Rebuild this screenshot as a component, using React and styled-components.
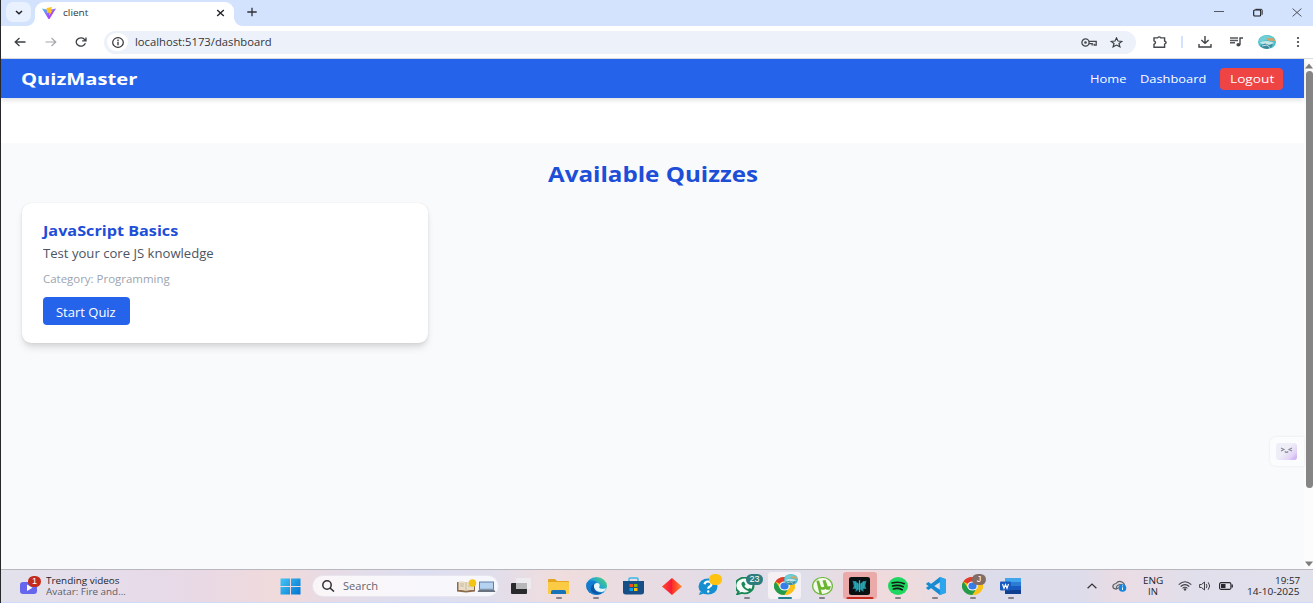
import React, { useLayoutEffect, useRef } from 'react';
import styled, { createGlobalStyle, css } from 'styled-components';

const GlobalStyle = createGlobalStyle`
  * { box-sizing: border-box; }
  html, body { margin: 0; padding: 0; overflow: hidden; }
  body { font-family: "Open Sans", "Noto Sans", sans-serif; }
  h1 { margin: 0; }
  svg { display: block; flex: none; }
  button { font: inherit; border: 0; }
`;

/* ---------- text that fills a given width ---------- */
const TextBox = styled.span`
  display: block;
  flex: none;
  width: ${(p) => p.$w}px;
  height: ${(p) => p.$lh || 14}px;
  line-height: ${(p) => p.$lh || 14}px;
  font-size: ${(p) => p.$size}px;
  font-weight: ${(p) => p.$weight || 400};
  color: ${(p) => p.$color || 'inherit'};
  white-space: nowrap;
  text-align: left;
`;
const Stretch = styled.span`
  display: inline-block;
  transform-origin: 0 50%;
`;
function Text({ w, size, lh, weight, color, children, as }) {
  const ref = useRef(null);
  useLayoutEffect(() => {
    const el = ref.current;
    el.style.transform = `scaleX(${w / el.offsetWidth})`;
  }, [w, children]);
  return (
    <TextBox as={as} $w={w} $size={size} $lh={lh} $weight={weight} $color={color}>
      <Stretch ref={ref}>{children}</Stretch>
    </TextBox>
  );
}

function Icon({ w = 21, h = 18, box = '0 0 24 24', children, ...rest }) {
  return (
    <svg width={w} height={h} viewBox={box} preserveAspectRatio="none" fill="none" {...rest}>
      {children}
    </svg>
  );
}

/* ---------- window ---------- */
const Window = styled.div`
  width: 1313px;
  height: 603px;
  display: flex;
  flex-direction: column;
  background: #fff;
  border-left: 1px solid #26272b;
  overflow: hidden;
`;
const TabStrip = styled.div`
  height: 26px;
  flex: none;
  display: flex;
  background: #d3e3fd;
`;
const TabSearch = styled.div`
  width: 25px;
  height: 20px;
  margin: 2px 0 0 5px;
  border-radius: 7px;
  background: #e9f1fe;
  display: flex;
  align-items: center;
  justify-content: center;
`;
const Tab = styled.div`
  position: relative;
  width: 199px;
  margin: 2px 0 0 4px;
  height: 24px;
  background: #fff;
  border-radius: 9px 9px 0 0;
  display: flex;
  align-items: center;
  padding: 0 9px 3px 7px;
  &::before, &::after {
    content: '';
    position: absolute;
    bottom: 0;
    width: 8px;
    height: 8px;
  }
  &::before { left: -8px; background: radial-gradient(circle at 0 0, transparent 7.5px, #fff 8px); }
  &::after { right: -8px; background: radial-gradient(circle at 100% 0, transparent 7.5px, #fff 8px); }
`;
const TabTitle = styled.div`
  flex: 1;
  padding-left: 6.5px;
`;
const NewTab = styled.div`
  margin: 7px 0 0 13px;
`;
const WindowControls = styled.div`
  margin-left: auto;
  display: flex;
  align-items: center;
  padding: 0 11px 2px 0;
  gap: 29px;
`;
const Toolbar = styled.div`
  height: 33px;
  flex: none;
  display: flex;
  align-items: center;
  padding: 0 13px 0 13px;
  border-bottom: 1px solid #dadce0;
`;
const NavButtons = styled.div`
  display: flex;
  align-items: center;
  gap: 18.5px;
  width: 90px;
`;
const Omnibox = styled.div`
  width: 1032px;
  height: 23px;
  border-radius: 12px;
  background: #ecf1fa;
  display: flex;
  align-items: center;
  padding: 0 13px 0 3px;
`;
const SiteInfo = styled.div`
  width: 21px;
  height: 18px;
  border-radius: 9px;
  background: #fff;
  display: flex;
  align-items: center;
  justify-content: center;
  margin-right: 7px;
`;
const OmniActions = styled.div`
  margin-left: auto;
  display: flex;
  align-items: center;
  gap: 13px;
`;
const ToolActions = styled.div`
  margin-left: auto;
  display: flex;
  align-items: center;
`;
const Divider = styled.i`
  width: 2px;
  height: 12px;
  background: #d3e3fd;
  margin: 0 15px 0 13px;
`;

/* ---------- page ---------- */
const Viewport = styled.div`
  height: 510px;
  flex: none;
  display: flex;
`;
const Page = styled.div`
  position: relative;
  width: 1303px;
  display: flex;
  flex-direction: column;
`;
const Navbar = styled.nav`
  height: 39px;
  flex: none;
  background: #2563eb;
  color: #fff;
  display: flex;
  align-items: center;
  justify-content: space-between;
  padding: 1px 21px 0 20px;
  box-shadow: 0 2px 5px rgba(0, 0, 0, 0.13);
`;
const NavLinks = styled.div`
  display: flex;
  align-items: center;
  gap: 13.5px;
`;
const Logout = styled.button`
  width: 63.5px;
  height: 22px;
  padding: 0 10px;
  border-radius: 4px;
  background: #ef4444;
  color: #fff;
  display: flex;
  align-items: center;
`;
const Main = styled.main`
  flex: 1;
  margin-top: 45px;
  background: #f9fafb;
  padding: 15px 21px;
  display: flex;
  flex-direction: column;
`;
const Heading = styled.div`
  display: flex;
  justify-content: center;
  margin-bottom: 14.5px;
`;
const Card = styled.article`
  width: 406px;
  height: 140px;
  border-radius: 9px;
  background: #fff;
  padding: 17px 21px;
  box-shadow: 0 0 1px rgba(0, 0, 0, 0.14), 0 6px 9px -2px rgba(0, 0, 0, 0.13), 0 2px 4px rgba(0, 0, 0, 0.05);
  display: flex;
  flex-direction: column;
  align-items: flex-start;
`;
const StartButton = styled.button`
  width: 87px;
  height: 28px;
  margin-top: 10.5px;
  margin-left: -0.5px;
  padding: 1px 13.5px 0;
  border-radius: 4px;
  background: #2563eb;
  color: #fff;
  display: flex;
  align-items: center;
`;
const Gap = styled.div`
  height: ${(p) => p.$h}px;
`;
const Assistant = styled.div`
  position: absolute;
  right: 0;
  top: 378px;
  width: 34px;
  height: 29px;
  border-radius: 6px 0 0 6px;
  background: #fbfcfd;
  box-shadow: 0 0 3px rgba(0, 0, 0, 0.08);
  display: flex;
  align-items: center;
  padding-left: 6px;
`;
const Face = styled.div`
  width: 21px;
  height: 17px;
  border-radius: 3px;
  background: linear-gradient(135deg, #eeeef6 45%, #e3d5f7 75%, #c6a4f0);
`;
const Scrollbar = styled.div`
  width: 9px;
  background: #fcfcfc;
  display: flex;
  flex-direction: column;
  align-items: flex-end;
  padding: 4px 0 2px;
`;
const Thumb = styled.div`
  width: 7px;
  height: 417px;
  margin-top: 2px;
  border-radius: 4px;
  background: #858585;
`;
const ScrollEnd = styled.div`
  margin-top: auto;
`;

/* ---------- taskbar ---------- */
const Taskbar = styled.footer`
  height: 34px;
  flex: none;
  display: flex;
  align-items: center;
  border-top: 1px solid #b9b7bd;
  border-bottom: 1px solid #cfdcf8;
  color: #25262b;
  background: linear-gradient(90deg, #e2e2ec 0, #e6dcea 110px, #e8d9e6 190px, #f0dadb 280px, #e6dbe6 335px, #dcdff1 420px, #e1deec 490px, #f0dddd 555px, #eadce1 620px, #e3dce7 720px, #dedfeb 800px, #efdadd 865px, #eedbdd 910px, #dddcea 980px, #dddcea 1080px, #ebdce4 1120px, #e1dfeb 1190px, #e1e1ec 100%);
`;
const Widget = styled.div`
  width: 279px;
  display: flex;
  align-items: center;
  padding: 0 0 1px 18px;
  gap: 4.5px;
`;
const SearchPill = styled.div`
  width: 187px;
  height: 22px;
  margin-left: 11px;
  border-radius: 11px;
  background: linear-gradient(90deg, #faf6f8, #f6f7fd);
  border: 1px solid #e9e5ef;
  display: flex;
  align-items: center;
  padding: 0 2px 0 8px;
`;
const SearchArt = styled.div`
  margin-left: auto;
`;
const Apps = styled.div`
  display: flex;
  height: 100%;
  margin-left: 3px;
`;
const AppSlot = styled.div`
  position: relative;
  width: 37.68px;
  height: 32px;
  display: flex;
  align-items: center;
  justify-content: center;
  &::before {
    content: '';
    position: absolute;
    z-index: 0;
    inset: 2px 2px 3px;
    border-radius: 3px;
    background: ${(p) => (p.$tile ? p.$tile : 'transparent')};
  }
  > svg { position: relative; z-index: 1; }
  ${(p) => p.$bar && css`
    &::after {
      content: '';
      position: absolute;
      z-index: 2;
      bottom: 3.5px;
      left: 50%;
      width: ${p.$barW || 6}px;
      height: 2px;
      border-radius: 1px;
      transform: translateX(-50%);
      background: ${p.$bar};
    }
  `}
`;
const Badge = styled.span`
  position: absolute;
  z-index: 3;
  top: ${(p) => p.$top}px;
  left: ${(p) => p.$left}px;
  width: ${(p) => p.$w}px;
  height: 11px;
  border-radius: 6px;
  background: ${(p) => p.$bg};
  color: #fff;
  font-family: "Liberation Sans", sans-serif;
  font-size: 9px;
  line-height: 11px;
  text-align: center;
`;
const WidgetIcon = styled.div`
  position: relative;
`;
const Tray = styled.div`
  margin-left: auto;
  display: flex;
  align-items: center;
  padding-right: 13px;
`;
const Stack = styled.div`
  display: flex;
  flex-direction: column;
  align-items: ${(p) => p.$align || 'flex-start'};
  margin-left: ${(p) => p.$ml || 0}px;
`;
const Spacer = styled.div`
  width: ${(p) => p.$w}px;
  flex: none;
`;

const Chrome = () => (
  <Icon>
    <circle cx="12" cy="12" r="12" fill="#fbc116" />
    <path d="M12 12 1.6 6A12 12 0 0 1 22.4 6Z" fill="#e33b2e" />
    <path d="M1.6 6A12 12 0 0 0 12 24L17 15 12 12 7 15Z" fill="#229c4c" />
    <path d="M12 6H22.4A12 12 0 0 1 12 24L17.2 15Z" fill="#fbc116" />
    <circle cx="12" cy="12" r="6" fill="#fff" />
    <circle cx="12" cy="12" r="4.7" fill="#357de8" />
  </Icon>
);
const Landscape = ({ w, h }) => (
  <Icon w={w} h={h} box="0 0 18 14">
    <ellipse cx="9" cy="7" rx="9" ry="7" fill="#4dbfcb" />
    <path d="M2 3Q8-2 15 3L17 6 9 5 1 7Z" fill="#70cfd6" />
    <path d="M1 8Q7 4 16 8L12 10 5 9Z" fill="#c5e6e8" />
    <path d="M8 3.5 15 3 17.5 6 10 5.5Z" fill="#d8a163" />
    <path d="M2 11 7 8.5 11 10 15 9 13 12.5 9 14 5 13Z" fill="#3c8799" />
    <path d="M4 11 9 10 12 12.5" stroke="#d8edf0" strokeWidth=".9" />
  </Icon>
);

const gray = '#858089';

export default function App() {
  return (
    <Window>
      <GlobalStyle />
      <TabStrip>
        <TabSearch>
          <Icon w={8} h={5} box="0 0 8 5"><path d="M1 1 4 3.8 7 1" stroke="#202124" strokeWidth="1.5" /></Icon>
        </TabSearch>
        <Tab>
          <Icon w={14} h={12} box="0 0 28 24">
            <defs>
              <linearGradient id="vite" x1="0" y1="0" x2="1" y2="1">
                <stop stopColor="#41c8ff" /><stop offset=".6" stopColor="#a34bfe" /><stop offset="1" stopColor="#bd34fe" />
              </linearGradient>
            </defs>
            <path d="M0 3 14 6 28 3 15 24H13Z" fill="url(#vite)" />
            <path d="M9 2 20 0 18 7H21L14 18 15 11 10 12Z" fill="#ffc51e" />
          </Icon>
          <TabTitle><Text w={25.5} size={9.5} color="#35373a">client</Text></TabTitle>
          <Icon w={9} h={8} box="0 0 9 8"><path d="M1.2 1 7.8 7M7.8 1 1.2 7" stroke="#25262a" strokeWidth="1.4" /></Icon>
        </Tab>
        <NewTab>
          <Icon w={10} h={10} box="0 0 10 10"><path d="M5 .8V9.2M.3 5H9.7" stroke="#303236" strokeWidth="1.3" /></Icon>
        </NewTab>
        <WindowControls>
          <Icon w={10} h={9} box="0 0 10 9"><path d="M0 3.5H10" stroke="#55585e" strokeWidth="1" /></Icon>
          <Icon w={10} h={9} box="0 0 10 9"><rect x=".7" y="2" width="7" height="6" rx="1" stroke="#16171a" strokeWidth="1.1" /><path d="M2.5 1.3H8.2Q9.2 1.3 9.2 2.3V6.7" stroke="#16171a" strokeWidth=".9" /></Icon>
          <Icon w={10} h={9} box="0 0 10 9"><path d="M.6.6 9.4 8.4M9.4.6.6 8.4" stroke="#4d5056" strokeWidth="1" /></Icon>
        </WindowControls>
      </TabStrip>

      <Toolbar>
        <NavButtons>
          <Icon w={12} h={10} box="0 0 12 10"><path d="M11.5 5H1.4M5.5 1 1.2 5 5.5 9" stroke="#3c4043" strokeWidth="1.3" /></Icon>
          <Icon w={12} h={10} box="0 0 12 10"><path d="M.5 5H10.6M6.5 1 10.8 5 6.5 9" stroke="#a4a6aa" strokeWidth="1.2" /></Icon>
          <Icon w={12} h={10} box="0 0 12 10"><path d="M10.4 6.3A4.7 4.1 0 1 1 9.4 2.2L10.8 3.6M11 .4V3.9H7.2" stroke="#3c4043" strokeWidth="1.3" /></Icon>
        </NavButtons>
        <Omnibox>
          <SiteInfo>
            <Icon w={12} h={11} box="0 0 12 11"><ellipse cx="6" cy="5.5" rx="5.3" ry="4.8" stroke="#303134" strokeWidth="1.2" /><path d="M6 4.8V8.2M6 2.6V3.9" stroke="#303134" strokeWidth="1.3" /></Icon>
          </SiteInfo>
          <Text w={137} size={11} color="#34363a">localhost:5173/dashboard</Text>
          <OmniActions>
            <Icon w={16} h={9} box="0 0 16 9"><circle cx="4.5" cy="4.5" r="3.6" stroke="#44474b" strokeWidth="1.3" /><circle cx="4.5" cy="4.5" r="1.3" fill="#44474b" /><path d="M8 3.4H15.2V7.2H13.2V5.8M8 5.6H11.2V7.5" stroke="#44474b" strokeWidth="1.3" /></Icon>
            <Icon w={13} h={11}><path d="M12 2 14.9 9 22 9.6 16.6 14.2 18.3 21.4 12 17.5 5.7 21.4 7.4 14.2 2 9.6 9.1 9Z" stroke="#3c4043" strokeWidth="2.3" /></Icon>
          </OmniActions>
        </Omnibox>
        <ToolActions>
          <Icon w={15} h={12} box="0 0 15 12"><path d="M1 1.9H4.6Q6.2-.2 7.8 1.9H11.6V5Q14.6 6.4 11.6 8V11.2H1V8.4Q4 6.5 1 4.8Z" stroke="#44474b" strokeWidth="1.4" /></Icon>
          <Divider />
          <Icon w={14} h={12} box="0 0 14 12"><path d="M7 0V7M3.4 4 7 7.4 10.6 4M1 8V11H13V8" stroke="#3c4043" strokeWidth="1.4" /></Icon>
          <Spacer $w={18} />
          <Icon w={13} h={10} box="0 0 13 10"><path d="M0 1H8M0 3.4H8M0 5.8H5" stroke="#55585c" strokeWidth="1.5" /><path d="M10 7.8V1H13" stroke="#44474b" strokeWidth="1.4" /><ellipse cx="8.4" cy="7.8" rx="2" ry="1.7" fill="#44474b" /></Icon>
          <Spacer $w={15} />
          <Landscape w={18} h={14} />
          <Spacer $w={20} />
          <Icon w={4} h={12} box="0 0 4 12"><g fill="#3c4043"><circle cx="2" cy="2" r="1.1" /><circle cx="2" cy="6" r="1.1" /><circle cx="2" cy="10" r="1.1" /></g></Icon>
        </ToolActions>
      </Toolbar>

      <Viewport>
        <Page>
          <Navbar>
            <Text w={116} size={16} lh={22} weight={700}>QuizMaster</Text>
            <NavLinks>
              <Text w={37} size={11.5}>Home</Text>
              <Text w={66} size={11.5}>Dashboard</Text>
              <Logout><Text w={44} size={11.5}>Logout</Text></Logout>
            </NavLinks>
          </Navbar>
          <Main>
            <Heading><Text as="h1" w={210} size={22} lh={30} weight={700} color="#1d4ed8">Available Quizzes</Text></Heading>
            <Card>
              <Text w={135} size={15} lh={20} weight={700} color="#1d4ed8">JavaScript Basics</Text>
              <Gap $h={5} />
              <Text w={170.5} size={11.7} lh={16} color="#4b5563">Test your core JS knowledge</Text>
              <Gap $h={10} />
              <Text w={126.5} size={10.5} lh={16} color="#9ca3af">Category: Programming</Text>
              <StartButton><Text w={60} size={11.7}>Start Quiz</Text></StartButton>
            </Card>
          </Main>
          <Assistant>
            <Face>
              <Icon w={21} h={17} box="0 0 21 17"><path d="M5 5 8 6.5 5 8M16 5 13 6.5 16 8M8.8 8.5Q10.5 10.3 12.2 8.5" stroke="#858993" strokeWidth="1.1" /></Icon>
            </Face>
          </Assistant>
        </Page>
        <Scrollbar>
          <Icon w={8} h={6} box="0 0 8 6"><path d="M0 5.5 4 .5 8 5.5Z" fill="#7d7d7d" /></Icon>
          <Thumb />
          <ScrollEnd><Icon w={8} h={6} box="0 0 8 6"><path d="M0 .5H8L4 5.5Z" fill="#7d7d7d" /></Icon></ScrollEnd>
        </Scrollbar>
      </Viewport>

      <Taskbar>
        <Widget>
          <WidgetIcon>
            <Icon w={22} h={18} box="0 0 22 18"><rect x="1" y="5" width="17" height="12" rx="3" fill="#6665ee" /><path d="M8 7.5V14L13.5 10.8Z" fill="#fff" /></Icon>
            <Badge $top={-1} $left={9} $w={13} $bg="#c42b1c">1</Badge>
          </WidgetIcon>
          <Stack>
            <Text w={73} size={9.5} lh={11}>Trending videos</Text>
            <Text w={80} size={9.5} lh={11} color="#5e5c65">Avatar: Fire and...</Text>
          </Stack>
        </Widget>
        <Icon w={21} h={17} box="0 0 21 17">
          <defs><linearGradient id="win" x1="0" y1="0" x2="21" y2="17" gradientUnits="userSpaceOnUse"><stop stopColor="#45c8f7" /><stop offset="1" stopColor="#0071d0" /></linearGradient></defs>
          <path d="M.5.5H10V8H.5ZM11 .5H20.5V8H11ZM.5 9H10V16.5H.5ZM11 9H20.5V16.5H11Z" fill="url(#win)" />
        </Icon>
        <SearchPill>
          <Icon w={14} h={12} box="0 0 14 12"><circle cx="6" cy="5" r="4.2" stroke="#303136" strokeWidth="1.5" /><path d="M9 8 13 11.5" stroke="#303136" strokeWidth="1.6" /></Icon>
          <Spacer $w={8} />
          <Text w={35.5} size={10} color="#65656c">Search</Text>
          <SearchArt>
            <Icon w={41} h={15} box="0 0 41 15">
              <path d="M2 3 11 3.5 20 3V12.5L11 13.5 2 12.5Z" fill="#8c6a4c" />
              <path d="M3.5 2.5Q8 1.5 11 3.5 15 1.5 19 2.5V11Q15 10.5 11 12 7 10.5 3.5 11Z" fill="#e9ddc5" />
              <path d="M11 3.5V12M5 5H9M5 7H9M13 7H17" stroke="#b9ad99" strokeWidth=".7" />
              <circle cx="17.5" cy="4" r="3.8" fill="#f2c514" />
              <path d="M24 2.5H39V10.5H24Z" fill="#617fa7" /><path d="M25 3.5H38V9.8H25Z" fill="#b5d3f1" />
              <path d="M24 10.5H39L40.5 13H22.5Z" fill="#67717f" />
            </Icon>
          </SearchArt>
        </SearchPill>
        <Apps>
          <AppSlot>
            <Icon w={22} h={18} box="0 0 22 18"><rect x="1" y="6" width="16" height="11" rx="1" fill="#292a2c" /><rect x="6" y="1" width="15" height="11" rx="1" fill="#eeeef0" opacity=".82" /><path d="M6 6H17V12H6Z" fill="#b7b7b9" /></Icon>
          </AppSlot>
          <AppSlot $bar={gray}>
            <Icon w={21} h={17} box="0 0 21 17"><path d="M0 2Q0 1 1 1H7L9 3H20Q21 3 21 4V8H0Z" fill="#e5a51c" /><rect y="4" width="21" height="12" rx="1" fill="#fbcb46" /><path d="M3 16V14Q3 12 5 12H16Q18 12 18 14V16Z" fill="#1673ba" /></Icon>
          </AppSlot>
          <AppSlot $bar={gray}>
            <Icon>
              <defs><linearGradient id="edge" x1="0" y1="1" x2="1" y2="0"><stop stopColor="#0b57a5" /><stop offset=".5" stopColor="#1b9de2" /><stop offset="1" stopColor="#55dc62" /></linearGradient></defs>
              <circle cx="12" cy="12" r="12" fill="url(#edge)" />
              <path d="M1 8Q6 2 13 7 9 8 9 13 9 22 19 21 12 26 5 21 0 17 1 8Z" fill="#137bd0" />
              <path d="M9 13Q9 8 13 8 17 9 15 14 16 17 23 15 22 19 18 20 10 20 9 13Z" fill="#e8f4f6" />
              <path d="M9 13Q9 21 18 21.5 10 25 6 19 4 13 9 9Z" fill="#0b55a2" />
            </Icon>
          </AppSlot>
          <AppSlot>
            <Icon w={21} h={18} box="0 0 21 18"><path d="M6 5V2Q6 1 7 1H14Q15 1 15 2V5" stroke="#38b9ec" strokeWidth="1.5" /><path d="M0 4H21V15Q21 17.5 18 17.5H3Q0 17.5 0 15Z" fill="#164e85" /><path d="M6.5 7H10V10H6.5Z" fill="#f25022" /><path d="M11 7H14.5V10H11Z" fill="#7fba00" /><path d="M6.5 11H10V14H6.5Z" fill="#00a4ef" /><path d="M11 11H14.5V14H11Z" fill="#ffb900" /></Icon>
          </AppSlot>
          <AppSlot>
            <Icon w={20} h={17} box="0 0 20 17"><defs><linearGradient id="dia"><stop stopColor="#ff4b28" /><stop offset=".5" stopColor="#f5173e" /><stop offset=".52" stopColor="#ff3028" /><stop offset="1" stopColor="#ff8b34" /></linearGradient></defs><path d="M10 0 20 8.5 10 17 0 8.5Z" fill="url(#dia)" /></Icon>
          </AppSlot>
          <AppSlot>
            <Icon w={22} h={20} box="0 0 22 20">
              <ellipse cx="10" cy="10.5" rx="9.5" ry="8" fill="#168fd0" /><path d="M2 16 1 19 6 17.5Z" fill="#168fd0" />
              <path d="M6.5 8.3Q7 5.5 10 5.5 13.5 5.5 13.5 8.3 13.5 9.7 11.5 10.7 10.2 11.5 10.2 12.7" stroke="#fff" strokeWidth="2.2" /><circle cx="10.2" cy="15.5" r="1.2" fill="#fff" />
            </Icon>
            <Badge $top={4} $left={18.5} $w={13} $bg="#ffc20e" />
          </AppSlot>
          <AppSlot $bar={gray}>
            <Icon><path d="M3 19.5 1.5 23 6.3 21.3A10.4 10.4 0 1 0 3 19.5Z" fill="#f5faf7" stroke="#198754" strokeWidth="2.4" /><path d="M7 7 9 6 11 10 9.5 12Q11 15 14 16L15.5 14.5 19 16.5Q18 19.5 15 19 8 17 6.3 10 6 8 7 7Z" fill="#198754" /></Icon>
            <Badge $top={4} $left={18} $w={17} $bg="#2c7d7c">23</Badge>
          </AppSlot>
          <AppSlot $tile="#f5f0f3" $bar="#23808d" $barW={14}>
            <Chrome />
            <Badge as="div" $top={4} $left={18} $w={14} $bg="transparent"><Landscape w={14} h={11} /></Badge>
          </AppSlot>
          <AppSlot $bar={gray}>
            <Icon><circle cx="12" cy="12" r="11.3" fill="#f5faed" stroke="#74b943" strokeWidth="1.5" /><path d="M5 5 8 4.5 10 12Q11 14.5 14 13L12 4.5 15.5 4 18 12.5 21.5 12 20.5 16.5Q17 18 15.5 15.5 13 18 10 16.5L11.5 23 8.5 22.5Z" fill="#69b52f" /></Icon>
          </AppSlot>
          <AppSlot $tile="#e9aaa9" $bar="#c42b20" $barW={27}>
            <Icon w={21} h={18}><rect width="24" height="24" rx="3" fill="#081012" /><path d="M4 5 8 5.5 11.2 9V4H12.8V9L16 5.5 20 5 18.5 12 20 16 16.5 15.5V20L12.8 16.5V20H11.2V16.5L7.5 20V15.5L4 16 5.5 12Z" fill="#1b8594" /><path d="M7 6V15M9.3 8V17M12 5V20M14.7 8V17M17 6V15" stroke="#3cc0cd" strokeWidth="1" /></Icon>
          </AppSlot>
          <AppSlot $bar={gray}>
            <Icon w={20}><circle cx="12" cy="12" r="12" fill="#1ed760" /><path d="M5 8Q13 5.5 19.5 9M5.5 12Q12 10 18.3 13M6.5 16Q12 14 17 17" stroke="#101c14" strokeWidth="2.1" strokeLinecap="round" /></Icon>
          </AppSlot>
          <AppSlot $bar={gray}>
            <Icon><path d="M17 0 24 3V21L17 24 1 9.2 3.8 6.7 17 17V7L3.8 17.3 1 14.8Z" fill="#168bd2" /><path d="M17 0 24 3V21L17 24Z" fill="#2aa5ee" /></Icon>
          </AppSlot>
          <AppSlot $bar={gray}>
            <Chrome />
            <Badge $top={4} $left={18} $w={14} $bg="#836c66">J</Badge>
          </AppSlot>
          <AppSlot $bar={gray}>
            <Icon w={21} h={18} box="0 0 21 18"><rect x="5" y="1" width="16" height="16" rx="1" fill="#2b7cd3" /><path d="M5 1H21V5H5Z" fill="#41a5ee" /><path d="M5 9H21V13H5Z" fill="#185abd" /><path d="M5 13H21V17H5Z" fill="#103f91" /><rect y="4.5" width="11" height="9" rx="1" fill="#185abd" /><path d="M2.5 7 4 11.3 5.5 7.5 7 11.3 8.5 7" stroke="#fff" strokeWidth="1.1" /></Icon>
          </AppSlot>
        </Apps>
        <Tray>
          <Icon w={10} h={6} box="0 0 10 6"><path d="M.6 5.3 5 1 9.4 5.3" stroke="#303136" strokeWidth="1.2" /></Icon>
          <Spacer $w={15} />
          <Icon w={15} h={12} box="0 0 15 12"><path d="M4 9.2Q.8 8.8.8 6.3 1.2 4 4 3.5 6.5.3 10 2 12.3 3.2 12.5 5Z" fill="#d9d6df" stroke="#626168" strokeWidth="1.2" /><path d="M5 9Q3.6 6.5 6 5.2 8 4 10.5 5" stroke="#626168" strokeWidth="1.2" /><circle cx="10.5" cy="8" r="3.8" fill="#1685de" /><path d="M10.5 7.3V10M10.5 5.4V6.3" stroke="#fff" strokeWidth=".9" /></Icon>
          <Stack $ml={16} $align="center">
            <Text w={20} size={9.5} lh={11}>ENG</Text>
            <Text w={10} size={9.5} lh={11}>IN</Text>
          </Stack>
          <Spacer $w={15} />
          <Icon w={14} h={10} box="0 0 14 10"><path d="M.7 3.6Q7-2 13.3 3.6M2.7 5.5Q7 1.7 11.3 5.5M4.6 7.3Q7 5.2 9.4 7.3" stroke="#414147" strokeWidth="1.1" /><circle cx="7" cy="8.4" r="1.2" fill="#414147" /></Icon>
          <Spacer $w={7} />
          <Icon w={12} h={10} box="0 0 12 10"><path d="M.6 3.5H2.5L5.5 1V9L2.5 6.5H.6ZM7.2 3Q8.8 5 7.2 7M9.2 1.3Q12.2 5 9.2 8.7" stroke="#414147" strokeWidth="1" /></Icon>
          <Spacer $w={8} />
          <Icon w={14} h={8} box="0 0 14 8"><rect x=".6" y=".6" width="11.3" height="6.8" rx="1.5" stroke="#26272b" strokeWidth="1.1" /><path d="M2 2H6.5V6H2Z" fill="#26272b" /><path d="M13.2 2.5V5.5" stroke="#26272b" strokeWidth="1.4" /></Icon>
          <Stack $ml={14} $align="flex-end">
            <Text w={25} size={9.5} lh={11}>19:57</Text>
            <Text w={53} size={9.5} lh={11}>14-10-2025</Text>
          </Stack>
        </Tray>
      </Taskbar>
    </Window>
  );
}
